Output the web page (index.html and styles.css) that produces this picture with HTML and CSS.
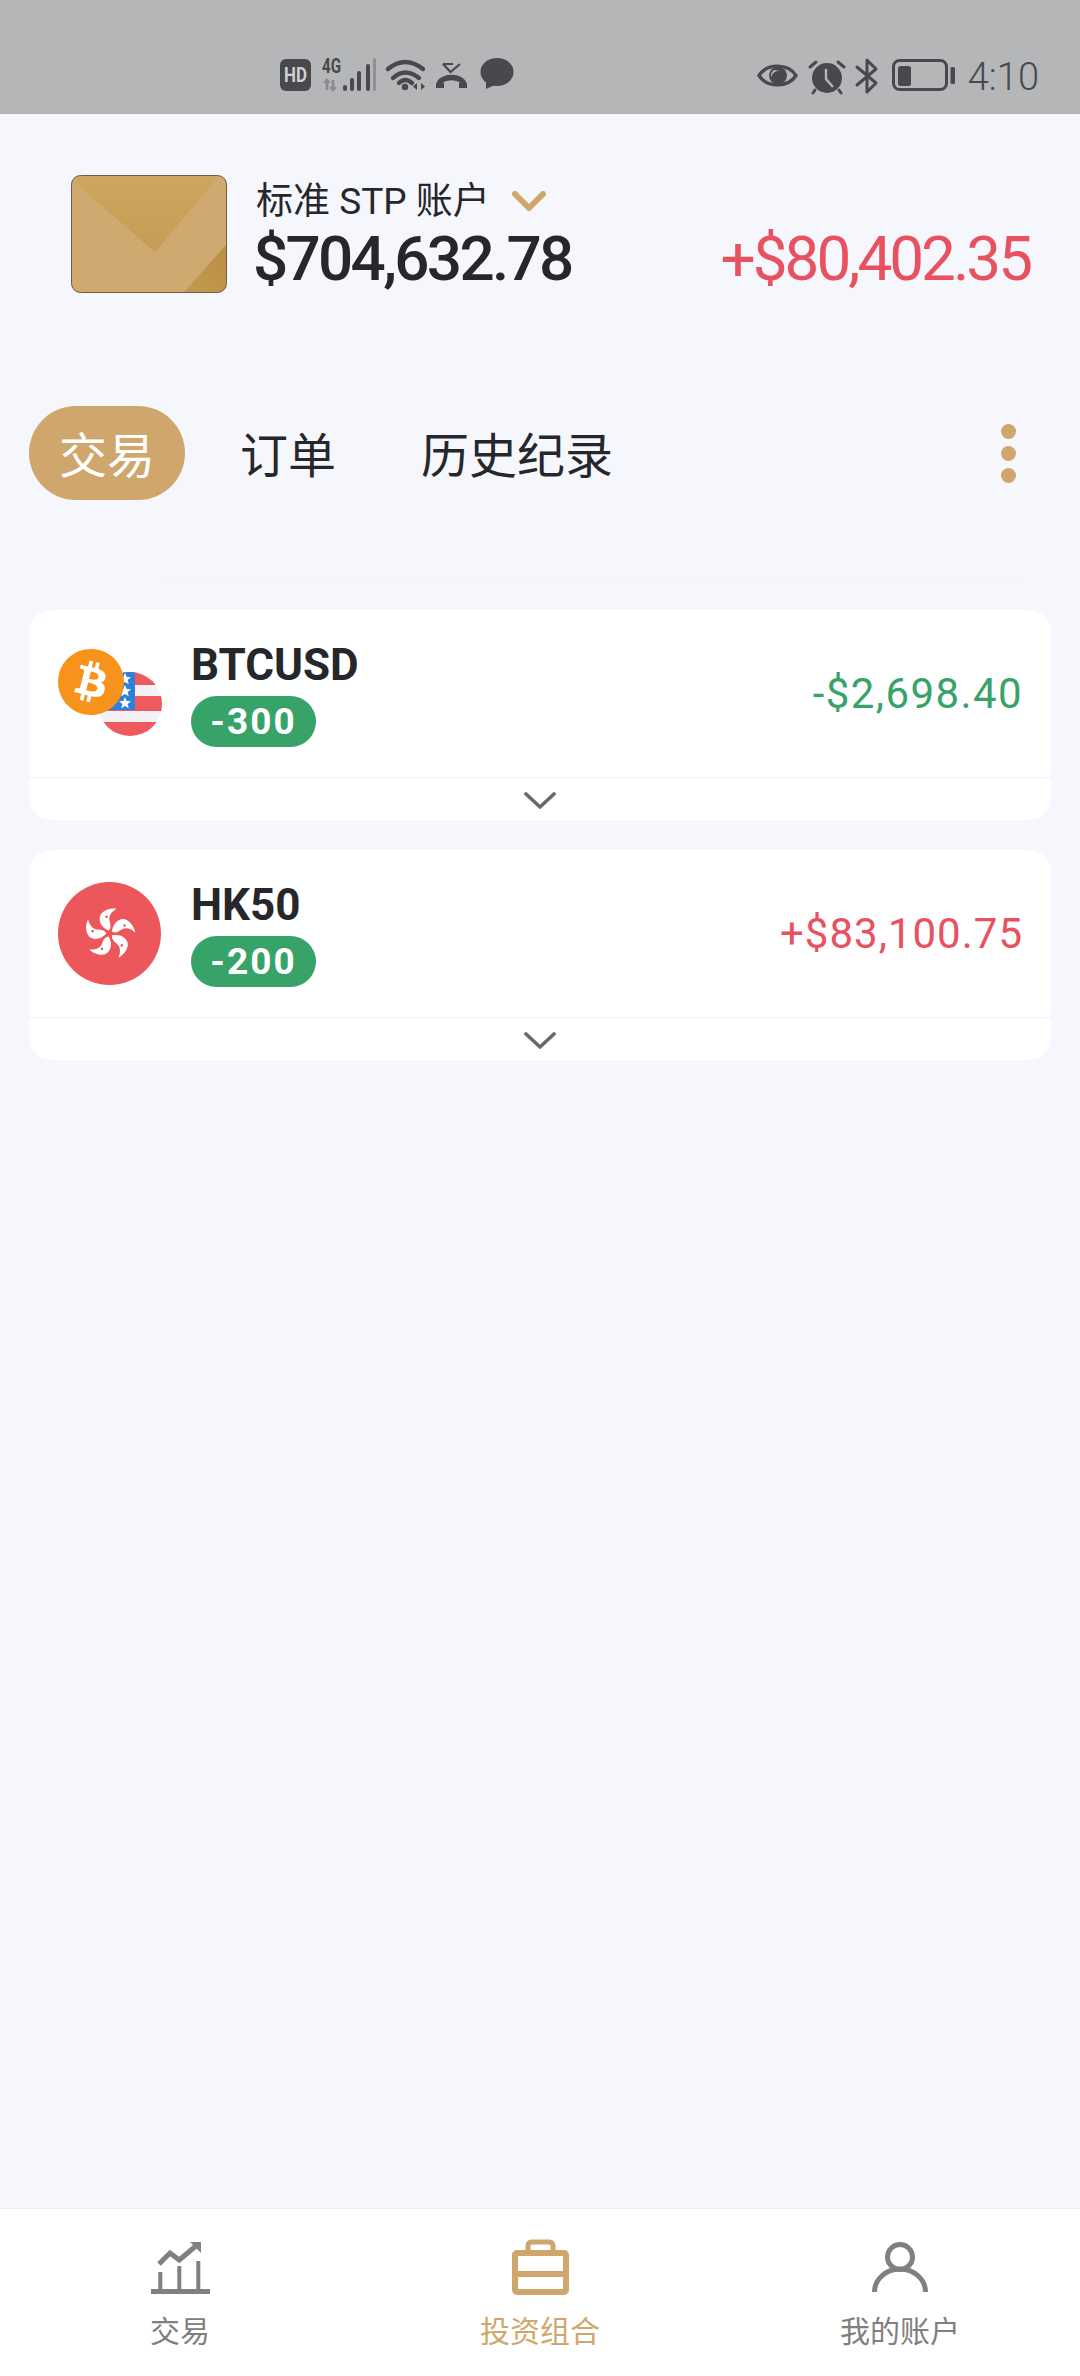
FILE: index.html
```html
<!DOCTYPE html>
<html lang="zh">
<head>
<meta charset="utf-8">
<title>投资组合</title>
<link rel="stylesheet" href="styles.css">
</head>
<body>
<div class="screen">
  <header class="status">
    <div class="status-group">
      <svg class="si si-hd" viewBox="0 0 31 32"><rect width="31" height="32" rx="6" fill="#48494c"/><text x="15.5" y="23" text-anchor="middle" class="hd-text" textLength="23" lengthAdjust="spacingAndGlyphs">HD</text></svg>
      <svg class="si si-signal" viewBox="0 0 54 33">
        <text x="0" y="15" class="g-text" textLength="19" lengthAdjust="spacingAndGlyphs">4G</text>
        <path d="M5 22v10M2.500 25l2.500-3 2.500 3M11 22v10M8.500 29l2.500 3 2.500-3" stroke="#8b8c8f" stroke-width="2.600" fill="none"/>
        <rect x="21" y="27" width="4" height="6" rx="2" fill="#48494c"/>
        <rect x="28" y="20" width="4" height="13" rx="2" fill="#48494c"/>
        <rect x="35" y="13" width="4" height="20" rx="2" fill="#48494c"/>
        <rect x="44" y="6" width="4" height="27" rx="2" fill="#48494c"/>
        <rect x="51" y="0" width="3" height="33" rx="1.5" fill="#8f9093"/>
      </svg>
      <svg class="si si-wifi" viewBox="0 0 42 32">
        <path d="M2 11Q19-3 37 11M7 20Q19 9 33 20M13 25Q19 19 26 25" fill="none" stroke="#48494c" stroke-width="4.4" stroke-linecap="round"/>
        <circle cx="19" cy="29" r="3.2" fill="#48494c"/>
        <path d="M31 25v7l-4-3.5zM35 25v7l4-3.5z" fill="#48494c"/>
      </svg>
      <svg class="si si-phone" viewBox="0 0 33 32">
        <path d="M8 6 15.500 14 25 6M8 6H18" fill="none" stroke="#48494c" stroke-width="2.200"/>
        <path d="M4 27C5 17 28 17 29 27" fill="none" stroke="#48494c" stroke-width="5.500" stroke-linecap="round"/>
        <path d="M1 25h8v5H1zM24 25h8v5h-8z" fill="#48494c"/>
      </svg>
      <svg class="si si-chat" viewBox="0 0 34 32">
        <ellipse cx="17" cy="14" rx="16.5" ry="14" fill="#48494c"/>
        <path d="M6 22 6 31 17 26z" fill="#48494c"/>
      </svg>
    </div>
    <div class="status-group">
      <svg class="si si-eye" viewBox="0 0 41 27">
        <path d="M2 13.500C10 1 31 1 39 13.500C31 26 10 26 2 13.500Z" fill="none" stroke="#48494c" stroke-width="3.400"/>
        <circle cx="21" cy="13.500" r="9" fill="#48494c"/>
        <path d="M17 8A7 7 0 0 0 14 15 8 8 0 0 1 23 9Z" fill="#b5b6b8"/>
      </svg>
      <svg class="si si-alarm" viewBox="0 0 36 34">
        <circle cx="18" cy="18" r="15" fill="#48494c"/>
        <path d="M1 7 7 2M35 7 29 2M6 30 4 33M30 30 32 33" stroke="#48494c" stroke-width="3" stroke-linecap="round"/>
        <path d="M17 9V19L24 27" fill="none" stroke="#b5b6b8" stroke-width="2.400"/>
      </svg>
      <svg class="si si-bt" viewBox="0 0 22 36">
        <path d="M1 9 20 25 11 34V2L20 11 1 27" fill="none" stroke="#48494c" stroke-width="3" stroke-linejoin="round" stroke-linecap="round"/>
      </svg>
      <svg class="si si-bat" viewBox="0 0 63 32">
        <rect x="1.500" y="1.500" width="53" height="29" rx="6" fill="none" stroke="#48494c" stroke-width="3"/>
        <rect x="6" y="7" width="13" height="20" rx="2.500" fill="#48494c"/>
        <rect x="58.500" y="8" width="4.500" height="17" rx="1.500" fill="#48494c"/>
      </svg>
      <span class="clock">4:10</span>
    </div>
  </header>

  <main class="main">
    <section class="account">
      <svg class="acct-card" viewBox="0 0 156 118">
        <defs>
          <linearGradient id="flap" x1="0" y1="0" x2="0" y2="1"><stop offset="0" stop-color="#cda75f"/><stop offset="1" stop-color="#c59c54"/></linearGradient>
          <linearGradient id="corner" x1="1" y1="0" x2="0" y2="1"><stop offset="0" stop-color="#b98e45"/><stop offset="1" stop-color="#c49a50"/></linearGradient>
        </defs>
        <rect x=".5" y=".5" width="155" height="117" rx="9" fill="#d0a970"/>
        <path d="M4 8Q5 1 12 1H148L84 77Z" fill="url(#flap)"/>
        <path d="M113 117 155 70V108Q155 117 146 117Z" fill="url(#corner)"/>
        <rect x=".5" y=".5" width="155" height="117" rx="9" fill="none" stroke="#6d5d45" stroke-width="1"/>
      </svg>
      <div class="acct-info">
        <div class="acct-name">
          <span>标准 STP 账户</span>
          <svg class="acct-chev" viewBox="0 0 34 22"><path d="M3 3 17 17 31 3" fill="none" stroke="#cfa76d" stroke-width="6" stroke-linecap="round" stroke-linejoin="round"/></svg>
        </div>
        <div class="balance">$704,632.78</div>
      </div>
      <div class="balance profit">+$80,402.35</div>
    </section>

    <nav class="tabs">
      <span class="tab tab-active">交易</span>
      <span class="tab">订单</span>
      <span class="tab">历史纪录</span>
      <span class="dots"><i></i><i></i><i></i></span>
    </nav>

    <div class="rule"></div>

    <section class="cards">
      <article class="card">
        <div class="card-body">
          <div class="pair">
            <svg class="flag-us" viewBox="0 0 64 66">
              <defs><clipPath id="us"><circle cx="32" cy="33" r="32"/></clipPath></defs>
              <g clip-path="url(#us)">
                <rect width="64" height="66" fill="#f1f1f6"/>
                <rect width="64" height="14" fill="#ee5a5e"/>
                <rect y="25" width="64" height="15" fill="#ee5a5e"/>
                <rect y="51" width="64" height="15" fill="#ee5a5e"/>
                <rect width="37" height="39" fill="#2f80d8"/>
                <path d="M27 2l1.700 4 4.300.3-3.300 2.800 1 4.200-3.700-2.300-3.700 2.300 1-4.200L21 6.300l4.300-.3zM27 14l1.700 4 4.300.3-3.300 2.800 1 4.200-3.700-2.300-3.700 2.300 1-4.200L21 18.300l4.300-.3zM27 26l1.700 4 4.300.3-3.300 2.800 1 4.200-3.700-2.300-3.700 2.300 1-4.200L21 30.300l4.300-.3z" fill="#fff"/>
              </g>
            </svg>
            <svg class="coin-btc" viewBox="0 0 24 24">
              <circle cx="12" cy="12" r="11" fill="#fff"/>
              <path fill="#f7931a" d="M23.638 14.904c-1.602 6.43-8.113 10.34-14.542 8.736C2.67 22.05-1.244 15.525.362 9.105 1.962 2.67 8.475-1.243 14.9.358c6.43 1.605 10.342 8.115 8.738 14.548v-.002zm-6.35-4.613c.24-1.59-.974-2.45-2.64-3.03l.54-2.153-1.315-.33-.525 2.107c-.345-.087-.705-.167-1.064-.25l.526-2.127-1.32-.33-.54 2.165c-.285-.067-.565-.132-.84-.2l-1.815-.45-.35 1.407s.975.225.955.236c.535.136.63.486.615.766l-1.477 5.92c-.075.166-.24.406-.614.314.015.02-.96-.24-.96-.24l-.66 1.51 1.71.426.93.242-.54 2.19 1.32.327.54-2.17c.36.1.705.19 1.05.273l-.51 2.154 1.32.33.545-2.19c2.24.427 3.93.257 4.64-1.774.57-1.637-.03-2.58-1.217-3.196.854-.193 1.5-.76 1.68-1.93h.01zm-3.01 4.22c-.404 1.64-3.157.75-4.05.53l.72-2.9c.896.23 3.757.67 3.33 2.37zm.41-4.24c-.37 1.49-2.662.735-3.405.55l.654-2.64c.744.18 3.137.524 2.75 2.084v.006z"/>
            </svg>
          </div>
          <div class="symbol">
            <div class="symbol-name">BTCUSD</div>
            <span class="qty">-300</span>
          </div>
          <div class="pnl pnl-down">-$2,698.40</div>
        </div>
        <div class="card-foot">
          <svg class="foot-chev" viewBox="0 0 32 20"><path d="M2 3 16 16 30 3" fill="none" stroke="#66686c" stroke-width="3.600" stroke-linecap="round" stroke-linejoin="round"/></svg>
        </div>
      </article>

      <article class="card">
        <div class="card-body">
          <svg class="pair" viewBox="-52 -52 104 104">
            <defs>
              <g id="petal">
                <path d="M-1-3C-8-6-12-13-9-19-6-24 2-26 7-25 2-22-1-18 0-13 1-9 2-6-1-3Z" fill="#fff"/>
                <circle cx="-3" cy="-17" r="1.300" fill="#ec575c"/>
              </g>
            </defs>
            <circle r="52" fill="#ec575c"/>
            <use href="#petal"/>
            <use href="#petal" transform="rotate(72)"/>
            <use href="#petal" transform="rotate(144)"/>
            <use href="#petal" transform="rotate(216)"/>
            <use href="#petal" transform="rotate(288)"/>
          </svg>
          <div class="symbol">
            <div class="symbol-name">HK50</div>
            <span class="qty">-200</span>
          </div>
          <div class="pnl pnl-up">+$83,100.75</div>
        </div>
        <div class="card-foot">
          <svg class="foot-chev" viewBox="0 0 32 20"><path d="M2 3 16 16 30 3" fill="none" stroke="#66686c" stroke-width="3.600" stroke-linecap="round" stroke-linejoin="round"/></svg>
        </div>
      </article>
    </section>
  </main>

  <footer class="bottom-nav">
    <div class="nav-item">
      <svg class="nav-icon" viewBox="0 0 59 58">
        <path d="M0 52.500H59" stroke="#808080" stroke-width="5"/>
        <path d="M9.300 33V50M28.300 27V50M47.300 22V50" stroke="#808080" stroke-width="4"/>
        <path d="M8 25 19 14 28.300 21 46 6" fill="none" stroke="#808080" stroke-width="5"/>
        <path d="M39 3H50V14Z" fill="#808080"/>
      </svg>
      <span class="nav-label">交易</span>
    </div>
    <div class="nav-item nav-active">
      <svg class="nav-icon" viewBox="0 0 57 58">
        <rect x="3" y="14" width="51" height="39" rx="2" fill="none" stroke="#cfa76d" stroke-width="6"/>
        <path d="M3 35H54" stroke="#cfa76d" stroke-width="6"/>
        <path d="M16 14V7Q16 3 20 3H37Q41 3 41 7V14" fill="none" stroke="#cfa76d" stroke-width="5"/>
      </svg>
      <span class="nav-label">投资组合</span>
    </div>
    <div class="nav-item">
      <svg class="nav-icon" viewBox="0 0 58 58">
        <circle cx="29" cy="18" r="12.500" fill="none" stroke="#808080" stroke-width="5"/>
        <path d="M3.500 53A25.500 23 0 0 1 54.500 53" fill="none" stroke="#808080" stroke-width="5"/>
      </svg>
      <span class="nav-label">我的账户</span>
    </div>
  </footer>
</div>
</body>
</html>
```
FILE: styles.css
```css
* { box-sizing: border-box; }
html, body { margin: 0; padding: 0; }
body {
  background: #f5f7fc;
  color: #25272b;
  font-family: Roboto, "Noto Sans CJK SC", sans-serif;
}
.screen {
  width: 1080px;
  height: 2376px;
  display: flex;
  flex-direction: column;
  overflow: hidden;
}

/* status bar */
.status {
  height: 114px;
  flex: none;
  background: #b5b6b8;
  display: flex;
  justify-content: space-between;
  align-items: flex-start;
  padding: 58px 41px 0 280px;
}
.status-group { display: flex; align-items: flex-start; }
.si { display: block; flex: none; overflow: visible; }
.si-hd { width: 31px; height: 32px; margin-top: 1px; }
.si-signal { width: 54px; height: 33px; margin-left: 11px; }
.si-wifi { width: 42px; height: 32px; margin-left: 10px; }
.si-phone { width: 33px; height: 32px; margin-left: 7px; }
.si-chat { width: 34px; height: 32px; margin-left: 12px; }
.si-eye { width: 41px; height: 27px; margin-top: 4px; }
.si-alarm { width: 36px; height: 34px; margin-left: 11px; margin-top: 2px; }
.si-bt { width: 22px; height: 36px; margin-left: 11px; }
.si-bat { width: 63px; height: 32px; margin-left: 14px; margin-top: 1px; }
.hd-text { font: 700 20px Roboto, sans-serif; fill: #d0d0d2; }
.g-text { font: 700 20px Roboto, sans-serif; fill: #48494c; }
.clock {
  margin-left: 13px;
  padding-top: 1px;
  font-size: 38px;
  font-weight: 300;
  line-height: 36px;
  color: #48494c;
}

/* main */
.main { flex: 1; min-height: 0; }
.account {
  display: flex;
  align-items: flex-start;
  padding: 61px 50px 0 71px;
}
.acct-card { width: 156px; height: 118px; flex: none; display: block; }
.acct-info { margin-left: 29px; padding-top: 5px; }
.acct-name {
  display: flex;
  align-items: center;
  font-size: 37px;
  line-height: 44px;
  color: #25272b;
}
.acct-chev { width: 34px; height: 22px; margin-left: 22px; }
.balance {
  font-size: 62px;
  line-height: 69px;
  font-weight: 500;
  letter-spacing: -2.7px;
  margin-left: -3px;
  white-space: nowrap;
}
.profit {
  margin-left: auto;
  padding-top: 49px;
  line-height: 69px;
  color: #e8515f;
  font-weight: 400;
  letter-spacing: -3px;
}

.tabs {
  display: flex;
  align-items: center;
  gap: 25px;
  margin-top: 113px;
  padding: 0 64px 0 29px;
  height: 94px;
}
.tab {
  font-size: 48px;
  line-height: 86px;
  padding: 8px 30px 0;
  color: #25272b;
}
.tab-active {
  background: #cfa76d;
  color: #fff;
  border-radius: 47px;
}
.dots { margin-left: auto; display: flex; flex-direction: column; gap: 7px; }
.dots i { display: block; width: 15px; height: 15px; border-radius: 50%; background: #cfa76d; }

.rule {
  height: 1px;
  margin: 80px 56px 0 160px;
  background: #f0f2f6;
}

/* cards */
.cards {
  display: flex;
  flex-direction: column;
  gap: 30px;
  margin: 29px 29px 0;
}
.card {
  background: #fff;
  border-radius: 22px;
  overflow: hidden;
}
.card-body {
  height: 168px;
  display: flex;
  align-items: center;
  padding: 0 28px 0 29px;
  border-bottom: 1px solid #f0f1f4;
}
.pair { position: relative; display: block; width: 103px; height: 103px; flex: none; }
.coin-btc { position: absolute; left: 0; top: 7px; width: 66px; height: 66px; }
.flag-us { position: absolute; left: 40px; top: 29px; width: 64px; height: 66px; }
.symbol { margin-left: 30px; }
.symbol-name { font-size: 44px; line-height: 50px; font-weight: 700; color: #25272b; }
.qty {
  display: block;
  width: 125px;
  height: 51px;
  margin-top: 6px;
  border-radius: 26px;
  background: #38a369;
  color: #fff;
  font-size: 37px;
  font-weight: 700;
  line-height: 51px;
  text-align: center;
  letter-spacing: 2px;
}
.pnl { margin-left: auto; font-size: 42px; letter-spacing: 1.4px; }
.pnl-down { color: #38a369; }
.pnl-up { color: #e8515f; letter-spacing: 1px; }
.card-foot {
  height: 42px;
  padding-top: 4px;
  display: flex;
  align-items: center;
  justify-content: center;
}
.foot-chev { width: 32px; height: 20px; display: block; }

/* bottom nav */
.bottom-nav {
  flex: none;
  height: 168px;
  background: #fff;
  border-top: 1px solid #eceef2;
  display: flex;
}
.nav-item {
  flex: 1;
  display: flex;
  flex-direction: column;
  align-items: center;
  padding-top: 30px;
  color: #808080;
}
.nav-active { color: #cfa76d; }
.nav-icon { height: 58px; display: block; }
.nav-label { margin-top: 15px; font-size: 30px; line-height: 40px; }
```
